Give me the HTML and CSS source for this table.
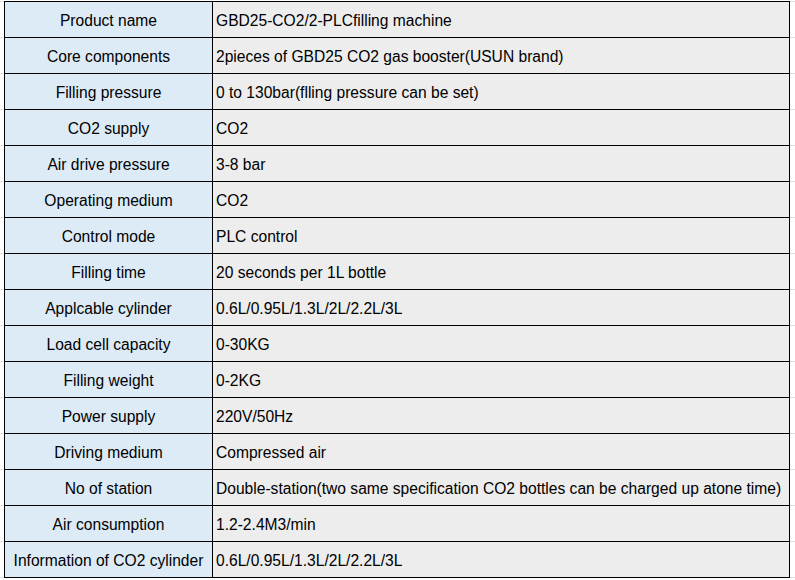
FILE: index.html
```html
<!DOCTYPE html>
<html>
<head>
<meta charset="utf-8">
<link rel="stylesheet" href="styles.css">
</head>
<body>
<div class="sheet">
<table class="spec">
<colgroup><col class="c-label"><col class="c-value"></colgroup>
<tbody>
<tr><td class="label">Product name</td><td class="value">GBD25-CO2/2-PLCfilling machine</td></tr>
<tr><td class="label">Core components</td><td class="value">2pieces of GBD25 CO2 gas booster(USUN brand)</td></tr>
<tr><td class="label">Filling pressure</td><td class="value">0 to 130bar(flling pressure can be set)</td></tr>
<tr><td class="label">CO2 supply</td><td class="value">CO2</td></tr>
<tr><td class="label">Air drive pressure</td><td class="value">3-8 bar</td></tr>
<tr><td class="label">Operating medium</td><td class="value">CO2</td></tr>
<tr><td class="label">Control mode</td><td class="value">PLC control</td></tr>
<tr><td class="label">Filling time</td><td class="value">20 seconds per 1L bottle</td></tr>
<tr><td class="label">Applcable cylinder</td><td class="value">0.6L/0.95L/1.3L/2L/2.2L/3L</td></tr>
<tr><td class="label">Load cell capacity</td><td class="value">0-30KG</td></tr>
<tr><td class="label">Filling weight</td><td class="value">0-2KG</td></tr>
<tr><td class="label">Power supply</td><td class="value">220V/50Hz</td></tr>
<tr><td class="label">Driving medium</td><td class="value">Compressed air</td></tr>
<tr><td class="label">No of station</td><td class="value">Double-station(two same specification CO2 bottles can be charged up atone time)</td></tr>
<tr><td class="label">Air consumption</td><td class="value">1.2-2.4M3/min</td></tr>
<tr><td class="label">Information of CO2 cylinder</td><td class="value">0.6L/0.95L/1.3L/2L/2.2L/3L</td></tr>
</tbody>
</table>
</div>
</body>
</html>
```

FILE: styles.css
```css
html, body {
  margin: 0;
  padding: 0;
  background: #fff;
}
body {
  width: 795px;
  height: 580px;
  overflow: hidden;
  background-image: repeating-linear-gradient(to bottom, #dcdcdc 0 1px, transparent 1px 36px);
  background-position: 0 1px;
  background-repeat: repeat;
}
.sheet {
  padding: 1px 0 0 4px;
}
.spec {
  border-collapse: collapse;
  table-layout: fixed;
  width: 786px;
  font-family: "Liberation Sans", Arial, sans-serif;
  font-size: 15.6px;
  color: #000;
}
.c-label { width: 208px; }
.spec td {
  border: 1px solid #000;
  height: 33px;
  padding: 2px 0 0 0;
  vertical-align: middle;
  white-space: nowrap;
  overflow: hidden;
}
.label {
  background: #ddebf7;
  text-align: center;
}
.spec .value {
  background: #ededed;
  text-align: left;
  padding-left: 3px;
}
```
